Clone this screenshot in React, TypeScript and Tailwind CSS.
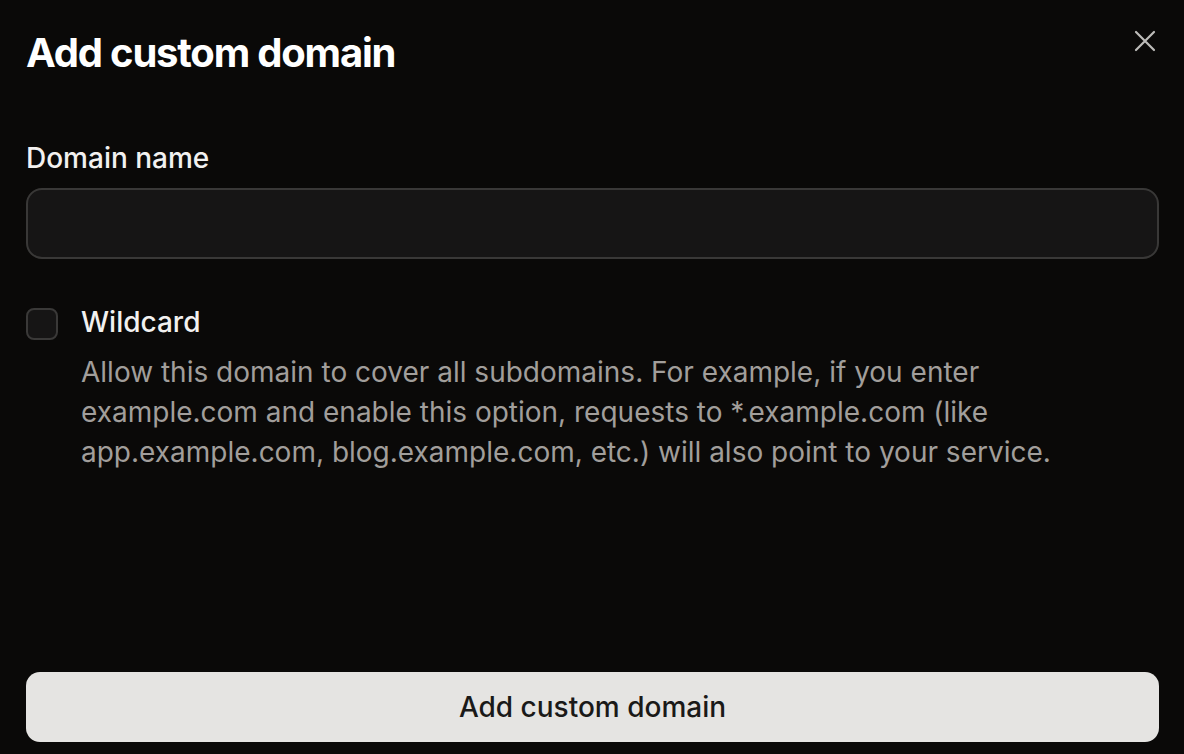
import { useState } from 'react';

export default function App() {
  const [domain, setDomain] = useState('');
  const [wildcard, setWildcard] = useState(false);

  return (
    <div
      className="h-screen w-full bg-[#0a0908] text-white flex flex-col pl-[26px] pr-[25px] pt-[29px] pb-[12px]"
      style={{ fontFamily: 'Inter, "Noto Sans", sans-serif' }}
    >
      <div className="flex items-start justify-between">
        <h1 className="text-[40px] leading-[48px] font-bold tracking-[-0.03em]">Add custom domain</h1>
        <button className="mt-[1px] mr-[3px] text-[#bdbcba]" aria-label="Close">
          <svg width="22" height="22" viewBox="0 0 22 22" fill="none" stroke="currentColor" strokeWidth="2.2" strokeLinecap="round">
            <path d="M2 2L20 20M20 2L2 20" />
          </svg>
        </button>
      </div>

      <label className="mt-[64px] text-[28px] leading-[34px] font-medium text-[#f2f1f0]">Domain name</label>
      <input
        value={domain}
        onChange={(e) => setDomain(e.target.value)}
        className="mt-[13px] h-[71px] w-full rounded-[16px] border-2 border-[#393837] bg-[#161515] px-5 text-[28px] text-white outline-none"
      />

      <div className="mt-[46px] flex gap-[23px]">
        <button
          onClick={() => setWildcard(!wildcard)}
          className="mt-[3px] h-[32px] w-[32px] shrink-0 rounded-[8px] border-2 border-[#3a3938] bg-[#161515]"
          aria-label="Wildcard"
        />
        <div className="flex flex-col">
          <span className="text-[28px] leading-[34px] font-medium text-[#f2f1f0]">Wildcard</span>
          <p className="mt-[13px] text-[28px] leading-[40px] text-[#a19e9b]">
            Allow this domain to cover all subdomains. For example, if you enter example.com and enable this option, requests to *.example.com (like app.example.com, blog.example.com, etc.) will also point to your service.
          </p>
        </div>
      </div>

      <div className="flex-1" />

      <button className="h-[70px] w-full rounded-[14px] bg-[#e5e4e2] text-[28px] font-medium text-[#1a1918]">
        Add custom domain
      </button>
    </div>
  );
}
